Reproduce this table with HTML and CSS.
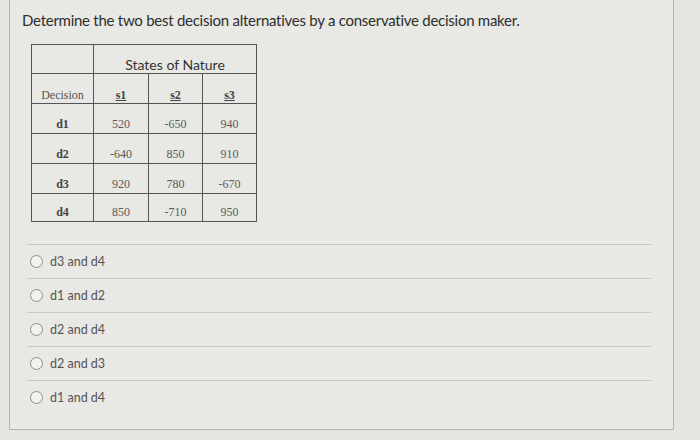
FILE: index.html
```html
<!DOCTYPE html>
<html>
<head>
<meta charset="utf-8">
<link rel="stylesheet" href="styles.css">
</head>
<body>
<div class="panel">
  <p class="question">Determine the two best decision alternatives by a conservative decision maker.</p>
  <table class="payoff">
    <colgroup>
      <col class="c0"><col class="c1"><col class="c2"><col class="c3">
    </colgroup>
    <tr class="r-top">
      <td></td>
      <td colspan="3" class="states">States of Nature</td>
    </tr>
    <tr class="r-head">
      <td class="dec">Decision</td>
      <td class="sh">s1</td>
      <td class="sh">s2</td>
      <td class="sh">s3</td>
    </tr>
    <tr class="r"><td class="dn">d1</td><td>520</td><td>-650</td><td>940</td></tr>
    <tr class="r"><td class="dn">d2</td><td>-640</td><td>850</td><td>910</td></tr>
    <tr class="r"><td class="dn">d3</td><td>920</td><td>780</td><td>-670</td></tr>
    <tr class="r r-last"><td class="dn">d4</td><td>850</td><td>-710</td><td>950</td></tr>
  </table>
  <ul class="options">
    <li class="option"><span class="radio"></span><span class="label">d3 and d4</span></li>
    <li class="option"><span class="radio"></span><span class="label">d1 and d2</span></li>
    <li class="option"><span class="radio"></span><span class="label">d2 and d4</span></li>
    <li class="option"><span class="radio"></span><span class="label">d2 and d3</span></li>
    <li class="option"><span class="radio"></span><span class="label">d1 and d4</span></li>
  </ul>
</div>
</body>
</html>
```
FILE: styles.css
```css
html, body {
  margin: 0;
  padding: 0;
  background: #e5e5e1;
}
body {
  width: 700px;
  height: 440px;
  overflow: hidden;
  font-family: Lato, "Liberation Sans", sans-serif;
}
.panel {
  box-sizing: border-box;
  margin-left: 9px;
  width: 665px;
  height: 430px;
  border: 1px solid #b4b4b0;
  border-top: none;
  background: #e8e8e4;
  padding: 11px 22px 0 12px;
}
.question {
  margin: 0;
  font-size: 15px;
  line-height: 18px;
  color: #2e2e2e;
  letter-spacing: -0.26px;
}
.payoff {
  margin: 15px 0 0 9px;
  border-collapse: collapse;
  font-family: "Liberation Serif", "Times New Roman", serif;
  font-size: 12px;
  color: #5a5a5a;
  table-layout: fixed;
}
.c0 { width: 62px; }
.c1 { width: 55px; }
.c2 { width: 54px; }
.c3 { width: 54px; }
.payoff td {
  border: 1px solid #545454;
  text-align: center;
  vertical-align: bottom;
  padding: 0 0 1px 0;
}
.r-top td { height: 28px; padding-bottom: 0; }
.r-head td { height: 29px; padding-bottom: 0; }
.r td { height: 28px; }
.r-last td { height: 26px; }
.states {
  font-family: Lato, "Liberation Sans", sans-serif;
  font-size: 14px;
  line-height: 16px;
  color: #333;
}
.dec { color: #555; }
.sh {
  font-weight: bold;
  text-decoration: underline;
  color: #444;
}
.dn {
  font-weight: bold;
  color: #444;
}
.options {
  list-style: none;
  margin: 22px 0 0 5px;
  padding: 0;
}
.option {
  display: flex;
  align-items: center;
  height: 33px;
  border-top: 1px solid #c9c9c5;
  padding-left: 3px;
}
.radio {
  box-sizing: border-box;
  width: 13px;
  height: 13px;
  border: 1px solid #8d8d8a;
  border-radius: 50%;
  background: #f1f1ee;
  margin-right: 7px;
}
.label {
  font-size: 12.5px;
  color: #555;
}
```
